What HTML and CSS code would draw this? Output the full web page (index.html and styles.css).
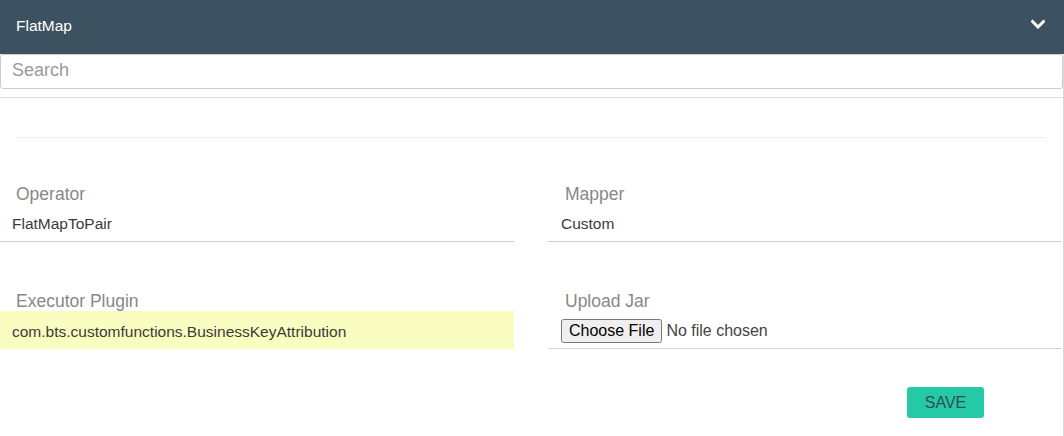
FILE: index.html
```html
<!DOCTYPE html>
<html>
<head>
<meta charset="utf-8">
<link rel="stylesheet" href="styles.css">
</head>
<body>
<div class="panel">
  <div class="header">
    <span class="title">FlatMap</span>
    <svg class="chev" width="14" height="10" viewBox="0 0 14 10"><path d="M1.5 2.5 L7 8 L12.5 2.5" fill="none" stroke="#fff" stroke-width="3" stroke-linecap="square"/></svg>
  </div>
  <div class="body">
    <div class="search-wrap"><input class="search" type="text" placeholder="Search"></div>
    <div class="content">
      <div class="rule"></div>
      <div class="grid">
        <div class="field">
          <div class="label">Operator</div>
          <div class="value">FlatMapToPair</div>
        </div>
        <div class="field right">
          <div class="label">Mapper</div>
          <div class="value">Custom</div>
        </div>
        <div class="field">
          <div class="label">Executor Plugin</div>
          <div class="value auto">com.bts.customfunctions.BusinessKeyAttribution</div>
        </div>
        <div class="field right">
          <div class="label">Upload Jar</div>
          <div class="value file"><input type="file" class="fileinput"></div>
        </div>
      </div>
      <div class="actions"><button class="save">SAVE</button></div>
    </div>
  </div>
</div>
</body>
</html>
```

FILE: styles.css
```css
* { box-sizing: border-box; }
html, body { margin: 0; padding: 0; background: #fff; }
body { font-family: "Liberation Sans", Arial, sans-serif; }
.panel { width: 1064px; }
.header {
  height: 54px;
  background: #3d5260;
  display: flex;
  align-items: center;
  justify-content: space-between;
  padding: 0 19px 0 16px;
}
.title { color: #fff; font-size: 15.5px; margin-top: -2px; }
.chev { display: block; margin-top: -6px; }
.body { border-right: 1px solid #d9d9d9; width: 1064px; }
.search-wrap { padding-bottom: 8px; border-bottom: 1px solid #dcdcdc; width: 1063px; }
.search {
  display: block;
  width: 1063px;
  height: 35px;
  margin: 0;
  border: 1px solid #cccccc;
  border-radius: 3px;
  padding: 0 11px 2px;
  font-family: "Liberation Sans", Arial, sans-serif;
  font-size: 18px;
  color: #333;
  outline: none;
}
.search::placeholder { color: #999; }
.content { padding-top: 39px; }
.rule { margin: 0 17px 0 16px; border-top: 1px solid #eeeeee; height: 0; }
.grid {
  display: grid;
  grid-template-columns: 514px 514px;
  column-gap: 34px;
  row-gap: 49px;
  margin-top: 46px;
}
.label { color: #888; font-size: 17.5px; line-height: 20px; padding-left: 16px; }
.right .label { padding-left: 17px; }
.value {
  height: 38px;
  border-bottom: 1px solid #cfcfcf;
  font-size: 15.5px;
  color: #3a3a3a;
  line-height: 38px;
  padding-left: 12px;
  padding-top: 1px;
}
.right .value { padding-left: 13px; }
.value.auto { background: #fafdc0; border-bottom-color: #fafdc0; padding-top: 2px; }
.value.file { display: flex; align-items: center; padding-top: 2px; border-bottom-color: #d4d4d4; height: 38px; }
.fileinput { font-family: "Liberation Sans", Arial, sans-serif; font-size: 16px; color: #444; }
.actions { display: flex; justify-content: flex-end; padding-right: 79px; margin-top: 38px; padding-bottom: 18px; }
.save {
  width: 77px;
  height: 31px;
  background: #25c9a5;
  color: #2f4f4f;
  border: none;
  border-radius: 3px;
  font-family: "Liberation Sans", Arial, sans-serif;
  font-size: 16px;
  padding: 0;
}
```
